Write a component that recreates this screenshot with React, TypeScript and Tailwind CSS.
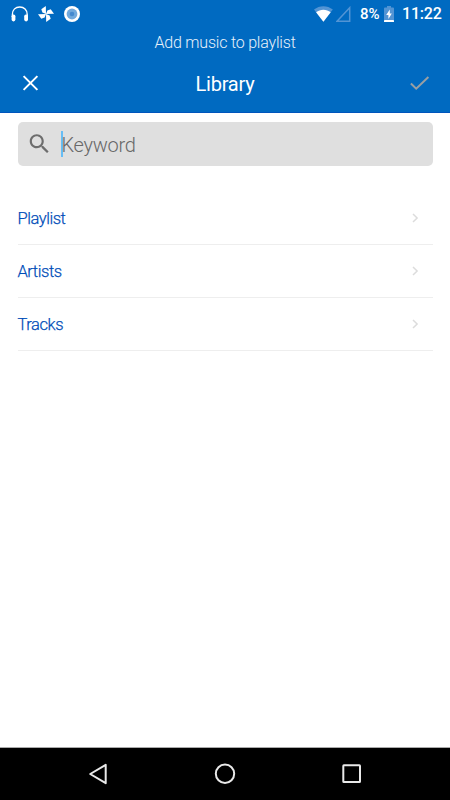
import React, { useState } from 'react';

const HeadphonesIcon = () => (
  <svg width="18" height="16" viewBox="0 0 18 16" fill="none">
    <path d="M1.4 11V8.5C1.4 3.8 4.6 1 8.8 1S16.2 3.8 16.2 8.5V11" stroke="#fff" strokeWidth="1.4" />
    <rect x="0.6" y="8.4" width="3.8" height="7" rx="1.8" fill="#fff" />
    <rect x="13.2" y="8.4" width="3.8" height="7" rx="1.8" fill="#fff" />
  </svg>
);

const PinwheelIcon = () => (
  <svg width="16" height="16" viewBox="0 0 16 16" fill="#fff">
    {[0, 90, 180, 270].map((angle) => (
      <path key={angle} d="M8 8L4.4 6.6L3.3 3.3L7.8 0z" transform={`rotate(${angle} 8 8)`} />
    ))}
  </svg>
);

const DiscIcon = () => (
  <svg width="16" height="16" viewBox="0 0 16 16">
    <circle cx="8" cy="8" r="8" fill="#fff" />
    <circle cx="8" cy="8" r="5.4" fill="#70a9dd" />
    <circle cx="8" cy="8" r="2.3" fill="#4389cf" />
  </svg>
);

const WifiIcon = () => (
  <svg width="20" height="16" viewBox="0 0 20 16">
    <path d="M0 3.5C5.6 -1 13.2 -1 18.8 3.5L9.4 15.8z" fill="#5294d4" />
    <path d="M2.1 6.3C6.2 2.8 12.6 2.8 16.7 6.3L9.4 15.8z" fill="#fff" />
  </svg>
);

const SignalIcon = () => (
  <svg width="16" height="16" viewBox="0 0 16 16" fill="none">
    <path d="M1 15.2H13.7V1.7z" stroke="#5294d4" strokeWidth="1.5" />
  </svg>
);

const BatteryIcon = () => (
  <svg width="10" height="16" viewBox="0 0 10 16">
    <path d="M3 0H7V1.5H9Q10 1.5 10 2.5V14H0V2.5Q0 1.5 1 1.5H3z" fill="#5294d4" />
    <rect y="14" width="10" height="2" rx="0.6" fill="#fff" />
    <path d="M5.8 3.5L2.2 9H4.4V13L7.8 7.5H5.8z" fill="#fff" />
  </svg>
);

const StatusBar = () => (
  <div className="flex h-7 items-center justify-between pl-[11px] pr-[9px] text-white">
    <div className="-mt-px flex items-center">
      <HeadphonesIcon />
      <span className="ml-[9px]"><PinwheelIcon /></span>
      <span className="ml-[10px]"><DiscIcon /></span>
    </div>
    <div className="flex items-center text-[16px] font-medium leading-7">
      <span className="-mt-px"><WifiIcon /></span>
      <span className="-mt-px ml-[2px]"><SignalIcon /></span>
      <span className="ml-[8px] w-[20px] whitespace-nowrap text-[15px]">8%</span>
      <span className="-mt-px ml-1"><BatteryIcon /></span>
      <span className="ml-2 w-[39px] whitespace-nowrap tracking-[-0.2px]">11:22</span>
    </div>
  </div>
);

const Header = () => (
  <header className="h-[113px] shrink-0 border-b border-[#0055bc] bg-[#006ac1]">
    <StatusBar />
    <div className="h-7 text-center text-[16px] font-light leading-[29px] tracking-[-0.2px] text-[#e8f1fa]">Add music to playlist</div>
    <div className="flex h-[55px] items-center justify-between pl-[20px] pr-[20px]">
      <button className="flex w-5 justify-center" aria-label="Close">
        <svg width="17" height="17" viewBox="0 0 17 17" fill="none" stroke="#fff" strokeWidth="2">
          <path d="M1.6 1.1L15.4 14.9M15.4 1.1L1.6 14.9" />
        </svg>
      </button>
      <h1 className="text-[20px] leading-[28px] tracking-[-0.2px] text-white">Library</h1>
      <button aria-label="Done">
        <svg width="20" height="16" viewBox="0 0 20 16" fill="none" stroke="#999fa3" strokeWidth="2">
          <path d="M0.9 7.5L6.2 12.7L18.4 1" />
        </svg>
      </button>
    </div>
  </header>
);

const SearchField = () => {
  const [keyword, setKeyword] = useState('');

  return (
    <div className="ml-[17.5px] mr-[17.5px] mt-[9px] flex h-11 items-center rounded-[5px] bg-[#dfdfdf] pl-[11.5px]">
      <svg width="20" height="20" viewBox="0 0 20 20" fill="#6d6d6d">
        <path transform="translate(-2.5 -3.1) scale(1.08)" d="M15.5 14h-.79l-.28-.27C15.41 12.59 16 11.11 16 9.5 16 5.91 13.09 3 9.5 3S3 5.91 3 9.5 5.91 16 9.5 16c1.61 0 3.09-.59 4.23-1.57l.27.28v.79l5 4.99L20.49 19l-4.99-5zm-6 0C7.01 14 5 11.99 5 9.5S7.01 5 9.5 5 14 7.01 14 9.5 11.99 14 9.5 14z" />
      </svg>
      <div className="ml-3 h-[26px] w-[2px] shrink-0 bg-[#66bdf5]" />
      <input
        type="text"
        value={keyword}
        onChange={(e) => setKeyword(e.target.value)}
        placeholder="Keyword"
        className="-ml-[1.5px] h-10 w-[340px] bg-transparent pt-[2px] text-[20px] font-light tracking-[-0.3px] text-[#555] placeholder:text-[#686868] focus:outline-none"
      />
    </div>
  );
};

const categories = ['Playlist', 'Artists', 'Tracks'];

const NavigationBar = () => (
  <nav className="flex h-[53px] shrink-0 items-center justify-between border-t border-[#aaa] bg-black pl-[88px] pr-[88px]">
    <svg width="20" height="22" viewBox="0 0 20 22" fill="none">
      <path d="M2.2 11L17.7 1.8V20.2z" stroke="#e9e9e9" strokeWidth="2" strokeLinejoin="round" />
    </svg>
    <svg width="22" height="22" viewBox="0 0 22 22" fill="none">
      <circle cx="11" cy="10.7" r="9.2" stroke="#e9e9e9" strokeWidth="2" />
    </svg>
    <svg width="20" height="20" viewBox="0 0 20 20" fill="none">
      <rect x="1.3" y="1.3" width="16.7" height="16.7" rx="0.6" stroke="#e9e9e9" strokeWidth="2" />
    </svg>
  </nav>
);

export default function App() {
  return (
    <div className="flex h-[800px] w-[450px] flex-col overflow-hidden bg-white font-['Roboto',sans-serif]">
      <Header />
      <main className="flex-1">
        <SearchField />
        <ul className="ml-[17.5px] mr-[17.5px] mt-[26px]">
          {categories.map((category) => (
            <li key={category} className="flex h-[53px] items-center justify-between border-b border-[#eee] pr-[14px]">
              <span className="pt-[2px] text-[16.5px] font-[350] leading-[24px] tracking-[-0.45px] text-[#004db8] [-webkit-text-stroke:0.25px_#004db8]">{category}</span>
              <svg width="7" height="10" viewBox="0 0 7 10" fill="none">
                <path d="M1 1L5.1 5L1 9" stroke="#dcdcdc" strokeWidth="1.5" />
              </svg>
            </li>
          ))}
        </ul>
      </main>
      <NavigationBar />
    </div>
  );
}
